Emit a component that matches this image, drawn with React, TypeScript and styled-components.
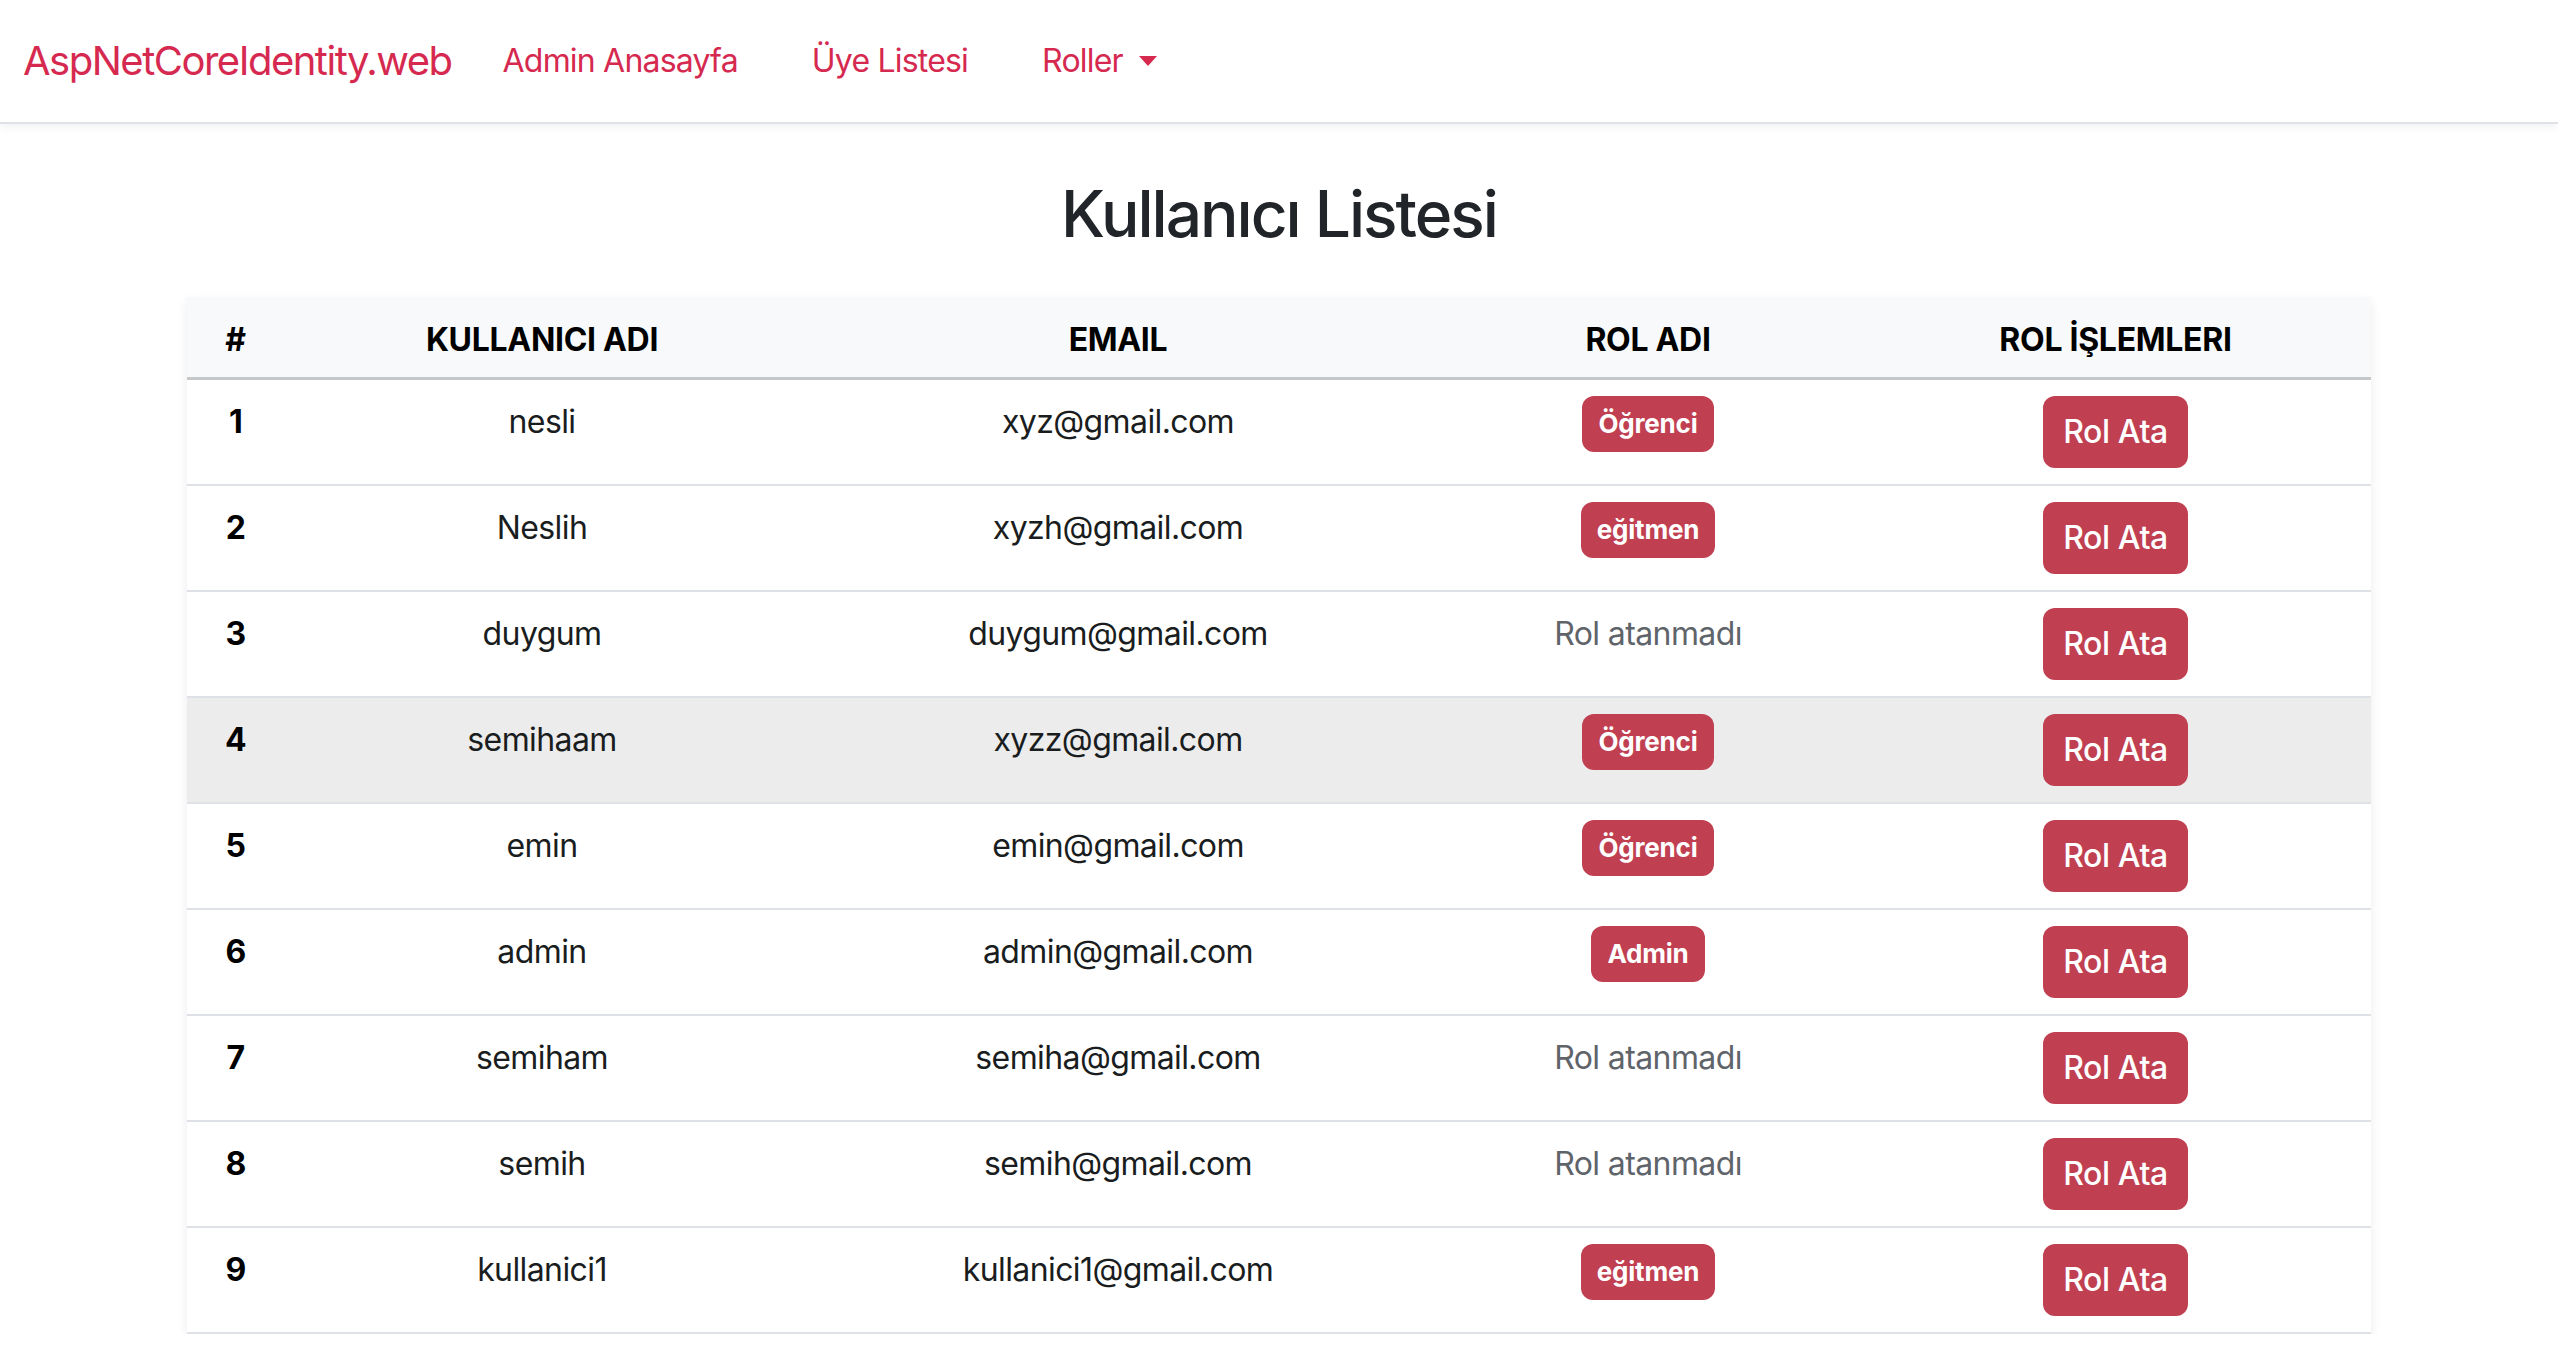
import React from "react";
import styled, { createGlobalStyle } from "styled-components";

const GlobalStyle = createGlobalStyle`
  html, body {
    margin: 0;
    padding: 0;
    background: #ffffff;
  }
  body {
    font-family: Inter, "Noto Sans", "Liberation Sans", sans-serif;
    color: #212529;
  }
  * { box-sizing: border-box; }
`;

const Navbar = styled.nav`
  height: 124px;
  display: flex;
  align-items: center;
  padding: 0 23px;
  background: #ffffff;
  border-bottom: 2px solid #dee2e6;
  box-shadow: 0 4px 8px rgba(0, 0, 0, 0.05);
`;

const Brand = styled.a`
  font-size: 40px;
  line-height: 60px;
  color: #d6294f;
  text-decoration: none;
  margin-right: 51px;
  letter-spacing: -1.5px;
`;

const NavLinks = styled.div`
  display: flex;
  align-items: center;
  gap: 74px;
`;

const NavLink = styled.a`
  display: flex;
  align-items: center;
  font-size: 32px;
  line-height: 48px;
  color: #d6294f;
  text-decoration: none;
  letter-spacing: -0.8px;
`;

const Caret = styled.span`
  display: inline-block;
  margin-left: 16px;
  width: 0;
  height: 0;
  border-top: 10px solid #d6294f;
  border-left: 9px solid transparent;
  border-right: 9px solid transparent;
`;

const Main = styled.main`
  width: 2184px;
  margin: 0 auto;
  display: flex;
  flex-direction: column;
  align-items: center;
`;

const Title = styled.h2`
  margin: 52px 0 44px;
  font-size: 64px;
  line-height: 1.2;
  font-weight: 500;
  color: #212529;
  letter-spacing: -2px;
`;

const Table = styled.table`
  width: 100%;
  table-layout: fixed;
  border-collapse: collapse;
  background: #ffffff;
  box-shadow: 0 4px 10px rgba(0, 0, 0, 0.08);
`;

const Col = styled.col<{ $w: number }>`
  width: ${(p) => p.$w}px;
`;

const HeadRow = styled.tr`
  background: #f8f9fa;
`;

const HeadCell = styled.th`
  padding: 19px 16px 13px;
  font-size: 32px;
  line-height: 48px;
  font-weight: 700;
  color: #000000;
  text-align: center;
  border-bottom: 3px solid #c6c7c9;
  letter-spacing: -0.3px;
`;

const Row = styled.tr<{ $hover?: boolean }>`
  background: ${(p) => (p.$hover ? "#ececec" : "#ffffff")};
  border-bottom: 2px solid #dee2e6;
`;

const Cell = styled.td<{ $bold?: boolean; $muted?: boolean }>`
  padding: 18px 16px 14px;
  height: 104px;
  vertical-align: top;
  text-align: center;
  font-size: 32px;
  line-height: 48px;
  font-weight: ${(p) => (p.$bold ? 700 : 400)};
  color: ${(p) => (p.$muted ? "#5f646a" : p.$bold ? "#000000" : "#1a1d20")};
  letter-spacing: -0.6px;
`;

const ActionCell = styled.td`
  padding: 16px;
  height: 104px;
  vertical-align: top;
  text-align: center;
`;

const BadgeCell = styled(ActionCell)``;

const Badge = styled.span`
  display: inline-block;
  padding: 16px 16px;
  font-size: 26px;
  line-height: 24px;
  font-weight: 700;
  color: #ffffff;
  background: #c04052;
  border-radius: 12px;
  letter-spacing: -0.2px;
`;

const Button = styled.button`
  display: inline-block;
  padding: 12px 20px;
  font-family: inherit;
  font-size: 32px;
  line-height: 48px;
  font-weight: 500;
  color: #ffffff;
  background: #c04052;
  border: none;
  border-radius: 12px;
  cursor: pointer;
  letter-spacing: -0.4px;
`;

type User = { id: number; name: string; email: string; role?: string };

const users: User[] = [
  { id: 1, name: "nesli", email: "xyz@gmail.com", role: "Öğrenci" },
  { id: 2, name: "Neslih", email: "xyzh@gmail.com", role: "eğitmen" },
  { id: 3, name: "duygum", email: "duygum@gmail.com" },
  { id: 4, name: "semihaam", email: "xyzz@gmail.com", role: "Öğrenci" },
  { id: 5, name: "emin", email: "emin@gmail.com", role: "Öğrenci" },
  { id: 6, name: "admin", email: "admin@gmail.com", role: "Admin" },
  { id: 7, name: "semiham", email: "semiha@gmail.com" },
  { id: 8, name: "semih", email: "semih@gmail.com" },
  { id: 9, name: "kullanici1", email: "kullanici1@gmail.com", role: "eğitmen" },
];

export default function App() {
  return (
    <>
      <GlobalStyle />
      <Navbar>
        <Brand href="#">AspNetCoreIdentity.web</Brand>
        <NavLinks>
          <NavLink href="#">Admin Anasayfa</NavLink>
          <NavLink href="#">Üye Listesi</NavLink>
          <NavLink href="#">
            Roller
            <Caret />
          </NavLink>
        </NavLinks>
      </Navbar>
      <Main>
        <Title>Kullanıcı Listesi</Title>
        <Table>
          <colgroup>
            <Col $w={97} />
            <Col $w={516} />
            <Col $w={636} />
            <Col $w={424} />
            <Col $w={511} />
          </colgroup>
          <thead>
            <HeadRow>
              <HeadCell>#</HeadCell>
              <HeadCell>KULLANICI ADI</HeadCell>
              <HeadCell>EMAIL</HeadCell>
              <HeadCell>ROL ADI</HeadCell>
              <HeadCell>ROL İŞLEMLERI</HeadCell>
            </HeadRow>
          </thead>
          <tbody>
            {users.map((u) => (
              <Row key={u.id} $hover={u.id === 4}>
                <Cell $bold>{u.id}</Cell>
                <Cell>{u.name}</Cell>
                <Cell>{u.email}</Cell>
                {u.role ? (
                  <BadgeCell>
                    <Badge>{u.role}</Badge>
                  </BadgeCell>
                ) : (
                  <Cell $muted>Rol atanmadı</Cell>
                )}
                <ActionCell>
                  <Button>Rol Ata</Button>
                </ActionCell>
              </Row>
            ))}
          </tbody>
        </Table>
      </Main>
    </>
  );
}
